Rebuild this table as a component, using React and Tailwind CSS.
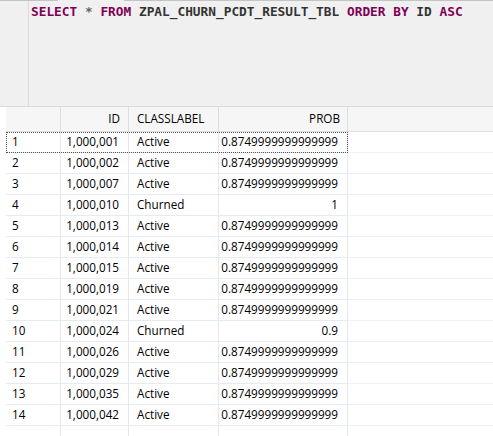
import React from "react";

const rows = [
  [1, "1,000,001", "Active", "0.8749999999999999"],
  [2, "1,000,002", "Active", "0.8749999999999999"],
  [3, "1,000,007", "Active", "0.8749999999999999"],
  [4, "1,000,010", "Churned", "1"],
  [5, "1,000,013", "Active", "0.8749999999999999"],
  [6, "1,000,014", "Active", "0.8749999999999999"],
  [7, "1,000,015", "Active", "0.8749999999999999"],
  [8, "1,000,019", "Active", "0.8749999999999999"],
  [9, "1,000,021", "Active", "0.8749999999999999"],
  [10, "1,000,024", "Churned", "0.9"],
  [11, "1,000,026", "Active", "0.8749999999999999"],
  [12, "1,000,029", "Active", "0.8749999999999999"],
  [13, "1,000,035", "Active", "0.8749999999999999"],
  [14, "1,000,042", "Active", "0.8749999999999999"],
];

// sql editor on top
function Editor() {
  const kw = "text-[#7f0055]";
  return (
    <div className="h-[107px] bg-[#f0f0f0] border-b border-[#dadada] flex flex-col">
      <div className="flex h-px">
        <div className="w-[58px] bg-[#c4c4c4]" />
        <div className="w-[66px]" />
        <div className="flex-1 bg-[#c4c4c4]" />
      </div>
      <div className="flex flex-1">
        <div className="w-[29px] border-r border-[#dcdcdc]" />
        <div
          className="pl-[2px] pt-[3px] text-[12.8px] leading-[16px] font-bold text-[#333] whitespace-pre"
          style={{ fontFamily: "'DejaVu Sans Mono', monospace" }}
        >
          <span className={kw}>SELECT</span> <span className="text-[#666]">*</span>{" "}
          <span className={kw}>FROM</span> ZPAL_CHURN_PCDT_RESULT_TBL{" "}
          <span className={kw}>ORDER</span> <span className={kw}>BY</span> ID{" "}
          <span className={kw}>ASC</span>
        </div>
      </div>
    </div>
  );
}

function Row({ n, id, label, prob, focused }) {
  return (
    <div className="flex h-[21px] bg-white">
      <div className="w-[6px]" />
      <div
        className={`flex flex-1 border-b border-[#e6ebf1] ${
          focused ? "outline outline-1 outline-dotted outline-[#555] -outline-offset-1" : ""
        }`}
      >
        <div className="w-[54px] pl-[6px] flex items-center">{n}</div>
        <div className="w-[68px] pr-[9px] border-l border-[#e3e9ef] flex items-center justify-end">{id}</div>
        <div className="w-[90px] pl-[8px] border-l border-[#e3e9ef] flex items-center">{label}</div>
        <div className="w-[130px] pr-[9px] border-l border-r border-[#e3e9ef] flex items-center justify-end">
          {prob}
        </div>
      </div>
      <div className="w-[145px] border-b border-[#eef2f6]" />
    </div>
  );
}

export default function App() {
  return (
    <div
      className="w-[493px] h-[436px] overflow-hidden bg-white flex flex-col text-[11.7px] text-[#000]"
      style={{ fontFamily: "'Open Sans', sans-serif" }}
    >
      <Editor />
      <div className="flex h-[25px]">
        <div className="w-[6px] bg-white" />
        <div className="flex flex-1 bg-[#f6f6f6] border-b border-[#dedede]">
          <div className="w-[54px]" />
          <div className="w-[68px] pr-[8px] border-l border-[#dedede] flex items-center justify-end">ID</div>
          <div className="w-[90px] pl-[8px] border-l border-[#dedede] flex items-center">CLASSLABEL</div>
          <div className="w-[130px] pr-[7px] border-l border-r border-[#dedede] flex items-center justify-end">
            PROB
          </div>
          <div className="flex-1" />
        </div>
      </div>
      {rows.map((r, i) => (
        <Row key={r[0]} n={r[0]} id={r[1]} label={r[2]} prob={r[3]} focused={i === 0} />
      ))}
      <div className="flex flex-1">
        <div className="w-[60px]" />
        <div className="w-[68px] border-l border-[#e3e9ef]" />
        <div className="w-[90px] border-l border-[#e3e9ef]" />
        <div className="w-[130px] border-l border-r border-[#e3e9ef]" />
      </div>
    </div>
  );
}
